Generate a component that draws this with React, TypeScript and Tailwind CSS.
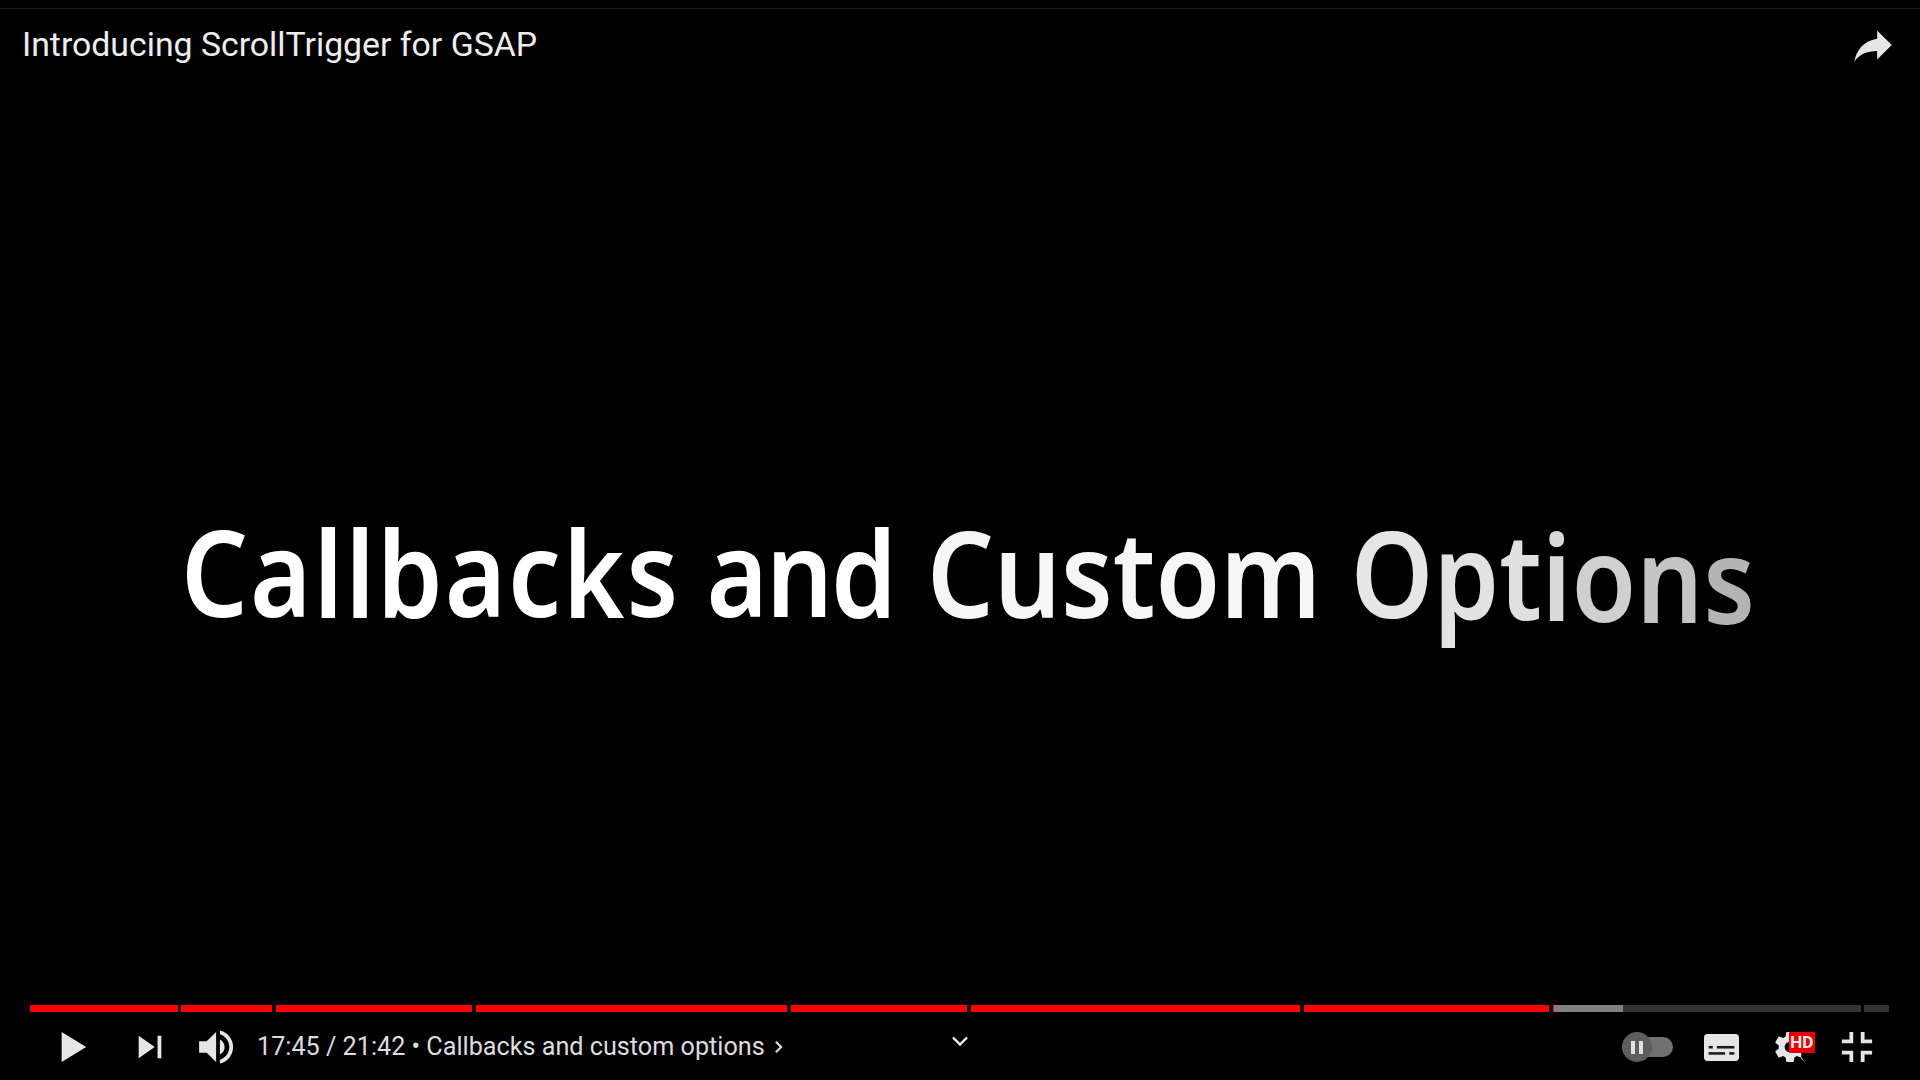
import React from 'react';

const white = '#e6e6e6';

const headlineWords = [
  { text: 'Callbacks', className: 'text-white tracking-[2.3px]' },
  { text: 'and', className: 'text-white ml-[30px] tracking-[-2.3px]' },
  { text: 'Custom', className: 'text-[#f6f6f6] ml-[37px] translate-y-[1px]' },
];

const optionLetters = [
  { ch: 'O', className: 'text-[#e6e6e6] ml-[34px] translate-y-[1px]' },
  { ch: 'p', className: 'text-[#e2e2e2] translate-y-[2px]' },
  { ch: 't', className: 'text-[#e0e0e0] translate-y-[3px]' },
  { ch: 'i', className: 'text-[#dadada] translate-y-[4px]' },
  { ch: 'o', className: 'text-[#cfcfcf] translate-y-[5px]' },
  { ch: 'n', className: 'text-[#c4c4c4] translate-y-[6px]' },
  { ch: 's', className: 'text-[#b4b4b4] translate-y-[7px]' },
];

function Icon({ d }: { d: string }) {
  return (
    <svg viewBox="0 0 36 36" className="w-[68px] h-[68px] shrink-0" fill={white}>
      <path d={d} />
    </svg>
  );
}

function ProgressBar() {
  return (
    <div className="flex h-[7px] ml-[30px] w-[1859px]">
      <div className="w-[148px] bg-[#ff0000]" />
      <div className="w-[91px] ml-[3px] bg-[#ff0000]" />
      <div className="w-[196px] ml-[4px] bg-[#ff0000]" />
      <div className="w-[311px] ml-[4px] bg-[#ff0000]" />
      <div className="w-[176px] ml-[4px] bg-[#ff0000]" />
      <div className="w-[329px] ml-[4px] bg-[#ff0000]" />
      <div className="w-[245px] ml-[4px] bg-[#ff0000]" />
      <div className="w-[308px] ml-[4px] flex bg-[#343434]">
        <div className="w-px bg-[#ff0000]" />
        <div className="w-[69px] bg-[#808080]" />
      </div>
      <div className="w-[25px] ml-[3px] bg-[#343434]" />
    </div>
  );
}

function AutoplayToggle() {
  return (
    <div className="relative w-[51px] h-[20px] rounded-full bg-[#717171] shrink-0">
      <div className="absolute left-0 top-[-5px] w-[30px] h-[30px] rounded-full bg-[#5e5e5e] flex items-center justify-center gap-[4px]">
        <span className="w-[4px] h-[13px] bg-[#e0e0e0]" />
        <span className="w-[4px] h-[13px] bg-[#e0e0e0]" />
      </div>
    </div>
  );
}

function SubtitlesIcon() {
  return (
    <svg viewBox="0 0 34 26" className="w-[35px] h-[27px] shrink-0">
      <rect width="34" height="26" rx="3.5" fill={white} />
      <rect x="4.5" y="11.5" width="4" height="2.5" fill="#1c1c1c" />
      <rect x="12.5" y="11.5" width="17" height="2.5" fill="#1c1c1c" />
      <rect x="4.5" y="17.5" width="16" height="2.5" fill="#1c1c1c" />
      <rect x="24.5" y="17.5" width="5" height="2.5" fill="#1c1c1c" />
    </svg>
  );
}

export default function App() {
  return (
    <div className="w-[1920px] h-[1080px] bg-black overflow-hidden flex flex-col font-['Roboto',sans-serif]">
      <div className="h-[9px] border-b border-[#1a1a1a]" />

      <header className="flex items-center justify-between h-[71px] pl-[22px] pr-[22px]">
        <h1 className="text-[33.8px] leading-none text-[#eeeeee]">Introducing ScrollTrigger for GSAP</h1>
        <svg viewBox="0 0 24 24" className="w-[50px] h-[50px]" fill={white}>
          <path d="M14 9V5l7 7-7 7v-4.1c-5 0-8.5 1.6-11 5.1 1-5 4-10 11-11z" />
        </svg>
      </header>

      <main className="flex-1 flex items-center pl-[181px] pt-[56px]">
        <div className="flex origin-left scale-x-[0.875] text-[120px] leading-none font-['Noto_Sans',sans-serif] font-semibold whitespace-nowrap">
          {headlineWords.map((w) => (
            <span key={w.text} className={w.className}>{w.text}</span>
          ))}
          {optionLetters.map((l) => (
            <span key={l.ch} className={l.className}>{l.ch}</span>
          ))}
        </div>
      </main>

      <footer className="h-[75px] flex flex-col">
        <ProgressBar />
        <div className="flex items-center h-[68px] pl-[39px] translate-y-[1px]">
          <Icon d="M12,26 18.5,22 18.5,14 12,10 z M18.5,22 25,18 25,18 18.5,14 z" />
          <div className="ml-[9px]">
            <Icon d="M12,24 20.5,18 12,12 V24 z M22,12 v12 h2 V12 h-2 z" />
          </div>
          <div className="ml-[0px]">
            <Icon d="M8,21 L12,21 L17,26 L17,10 L12,15 L8,15 L8,21 Z M19,14 L19,22 C20.48,21.32 21.5,19.77 21.5,18 C21.5,16.26 20.48,14.74 19,14 Z M19,11.29 C21.89,12.15 24,14.83 24,18 C24,21.17 21.89,23.85 19,24.71 L19,26.77 C23.01,25.86 26,22.28 26,18 C26,13.72 23.01,10.14 19,9.23 L19,11.29 Z" />
          </div>
          <span className="ml-[5px] text-[25.2px] leading-none text-[#dddddd] whitespace-nowrap">
            17:45 / 21:42 • Callbacks and custom options
          </span>
          <svg viewBox="0 0 10 16" className="ml-[9px] w-[9px] h-[14px] shrink-0" fill="none" stroke="#dddddd" strokeWidth="2.4">
            <path d="M2 2l6 6-6 6" />
          </svg>
          <svg viewBox="0 0 16 10" className="ml-[169px] -mt-[12px] w-[16px] h-[10px] shrink-0" fill="none" stroke="#eeeeee" strokeWidth="2.4">
            <path d="M1 1.5l7 7 7-7" />
          </svg>
          <div className="ml-[654px] flex items-center">
            <AutoplayToggle />
            <div className="ml-[31px]">
              <SubtitlesIcon />
            </div>
            <div className="relative ml-[17px] w-[68px] h-[68px]">
              <Icon d="m23.94,18.78 c.03,-0.25 .05,-0.51 .05,-0.78 0,-0.27 -0.02,-0.52 -0.05,-0.78 l1.68,-1.32 c.15,-0.12 .19,-0.33 .09,-0.51 l-1.6,-2.76 c-0.09,-0.17 -0.31,-0.24 -0.48,-0.17 l-1.99,.8 c-0.41,-0.32 -0.86,-0.58 -1.35,-0.78 l-0.30,-2.12 c-0.02,-0.19 -0.19,-0.33 -0.39,-0.33 l-3.2,0 c-0.2,0 -0.36,.14 -0.39,.33 l-0.30,2.12 c-0.48,.2 -0.93,.47 -1.35,.78 l-1.99,-0.8 c-0.18,-0.07 -0.39,0 -0.48,.17 l-1.6,2.76 c-0.10,.17 -0.05,.39 .09,.51 l1.68,1.32 c-0.03,.25 -0.05,.52 -0.05,.78 0,.26 .02,.52 .05,.78 l-1.68,1.32 c-0.15,.12 -0.19,.33 -0.09,.51 l1.6,2.76 c.09,.17 .31,.24 .48,.17 l1.99,-0.8 c.41,.32 .86,.58 1.35,.78 l.30,2.12 c.02,.19 .19,.33 .39,.33 l3.2,0 c.2,0 .36,-0.14 .39,-0.33 l.30,-2.12 c.48,-0.2 .93,-0.47 1.35,-0.78 l1.99,.8 c.18,.07 .39,0 .48,-0.17 l1.6,2.76 c.09,-0.17 .05,-0.39 -0.09,-0.51 l-1.68,-1.32 0,0 z m-5.94,2.01 c-1.54,0 -2.8,-1.25 -2.8,-2.8 0,-1.54 1.25,-2.8 2.8,-2.8 1.54,0 2.8,1.25 2.8,2.8 0,1.54 -1.25,2.8 -2.8,2.8 l0,0 z" />
              <span className="absolute left-[33px] top-[19px] w-[26px] h-[21px] rounded-[1px] bg-[#e60000] text-[#eeeeee] text-[17px] font-bold leading-[21px] text-center">HD</span>
            </div>
            <div className="ml-[-1px]">
              <Icon d="M14,14 h-4 v2 h6 v-6 h-2 v4 z M22,14 v-4 h-2 v6 h6 v-2 h-4 z M20,26 h2 v-4 h4 v-2 h-6 v6 z M10,22 h4 v4 h2 v-6 h-6 v2 z" />
            </div>
          </div>
        </div>
      </footer>
    </div>
  );
}
